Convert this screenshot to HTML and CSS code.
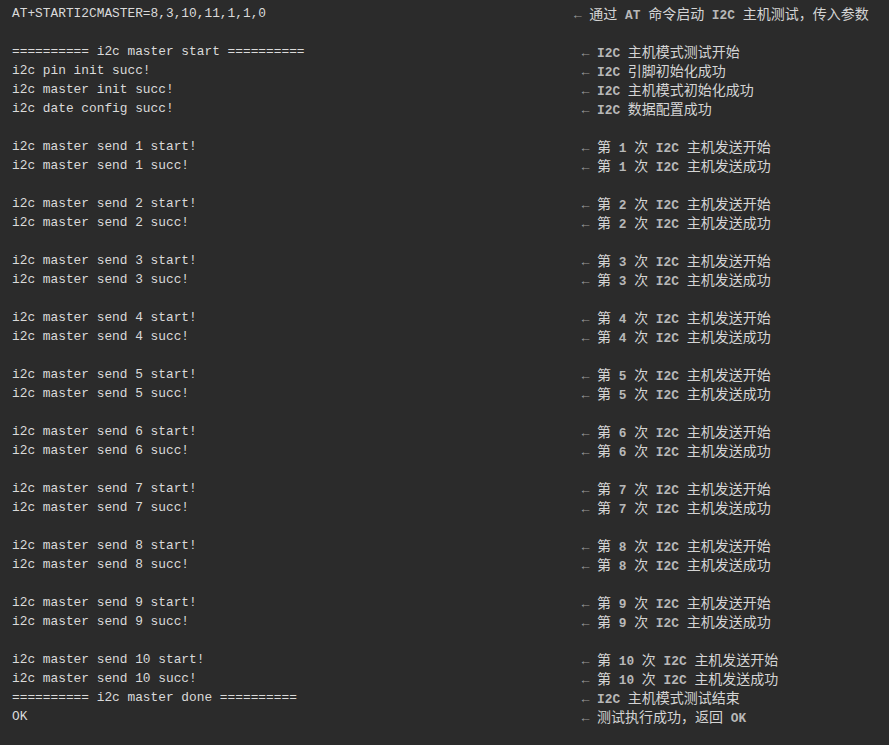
FILE: index.html
```html
<!DOCTYPE html>
<html lang="zh-CN">
<head>
<meta charset="utf-8">
<title>I2C master log</title>
<link rel="stylesheet" href="styles.css">
</head>
<body>
<div class="log">
  <div class="line"><span class="code first">AT+STARTI2CMASTER=8,3,10,11,1,1,0</span><span class="note"><span class="arr">←</span> <span class="zh">通过</span> <b>AT</b> <span class="zh">命令启动</span> <b>I2C</b> <span class="zh">主机测试，传入参数</span></span></div>
  <div class="line"></div>
  <div class="line"><span class="code">========== i2c master start ==========</span><span class="note"><span class="arr">←</span> <b>I2C</b> <span class="zh">主机模式测试开始</span></span></div>
  <div class="line"><span class="code">i2c pin init succ!</span><span class="note"><span class="arr">←</span> <b>I2C</b> <span class="zh">引脚初始化成功</span></span></div>
  <div class="line"><span class="code">i2c master init succ!</span><span class="note"><span class="arr">←</span> <b>I2C</b> <span class="zh">主机模式初始化成功</span></span></div>
  <div class="line"><span class="code">i2c date config succ!</span><span class="note"><span class="arr">←</span> <b>I2C</b> <span class="zh">数据配置成功</span></span></div>
  <div class="line"></div>
  <div class="line"><span class="code">i2c master send 1 start!</span><span class="note"><span class="arr">←</span> <span class="zh">第</span> <b>1</b> <span class="zh">次</span> <b>I2C</b> <span class="zh">主机发送开始</span></span></div>
  <div class="line"><span class="code">i2c master send 1 succ!</span><span class="note"><span class="arr">←</span> <span class="zh">第</span> <b>1</b> <span class="zh">次</span> <b>I2C</b> <span class="zh">主机发送成功</span></span></div>
  <div class="line"></div>
  <div class="line"><span class="code">i2c master send 2 start!</span><span class="note"><span class="arr">←</span> <span class="zh">第</span> <b>2</b> <span class="zh">次</span> <b>I2C</b> <span class="zh">主机发送开始</span></span></div>
  <div class="line"><span class="code">i2c master send 2 succ!</span><span class="note"><span class="arr">←</span> <span class="zh">第</span> <b>2</b> <span class="zh">次</span> <b>I2C</b> <span class="zh">主机发送成功</span></span></div>
  <div class="line"></div>
  <div class="line"><span class="code">i2c master send 3 start!</span><span class="note"><span class="arr">←</span> <span class="zh">第</span> <b>3</b> <span class="zh">次</span> <b>I2C</b> <span class="zh">主机发送开始</span></span></div>
  <div class="line"><span class="code">i2c master send 3 succ!</span><span class="note"><span class="arr">←</span> <span class="zh">第</span> <b>3</b> <span class="zh">次</span> <b>I2C</b> <span class="zh">主机发送成功</span></span></div>
  <div class="line"></div>
  <div class="line"><span class="code">i2c master send 4 start!</span><span class="note"><span class="arr">←</span> <span class="zh">第</span> <b>4</b> <span class="zh">次</span> <b>I2C</b> <span class="zh">主机发送开始</span></span></div>
  <div class="line"><span class="code">i2c master send 4 succ!</span><span class="note"><span class="arr">←</span> <span class="zh">第</span> <b>4</b> <span class="zh">次</span> <b>I2C</b> <span class="zh">主机发送成功</span></span></div>
  <div class="line"></div>
  <div class="line"><span class="code">i2c master send 5 start!</span><span class="note"><span class="arr">←</span> <span class="zh">第</span> <b>5</b> <span class="zh">次</span> <b>I2C</b> <span class="zh">主机发送开始</span></span></div>
  <div class="line"><span class="code">i2c master send 5 succ!</span><span class="note"><span class="arr">←</span> <span class="zh">第</span> <b>5</b> <span class="zh">次</span> <b>I2C</b> <span class="zh">主机发送成功</span></span></div>
  <div class="line"></div>
  <div class="line"><span class="code">i2c master send 6 start!</span><span class="note"><span class="arr">←</span> <span class="zh">第</span> <b>6</b> <span class="zh">次</span> <b>I2C</b> <span class="zh">主机发送开始</span></span></div>
  <div class="line"><span class="code">i2c master send 6 succ!</span><span class="note"><span class="arr">←</span> <span class="zh">第</span> <b>6</b> <span class="zh">次</span> <b>I2C</b> <span class="zh">主机发送成功</span></span></div>
  <div class="line"></div>
  <div class="line"><span class="code">i2c master send 7 start!</span><span class="note"><span class="arr">←</span> <span class="zh">第</span> <b>7</b> <span class="zh">次</span> <b>I2C</b> <span class="zh">主机发送开始</span></span></div>
  <div class="line"><span class="code">i2c master send 7 succ!</span><span class="note"><span class="arr">←</span> <span class="zh">第</span> <b>7</b> <span class="zh">次</span> <b>I2C</b> <span class="zh">主机发送成功</span></span></div>
  <div class="line"></div>
  <div class="line"><span class="code">i2c master send 8 start!</span><span class="note"><span class="arr">←</span> <span class="zh">第</span> <b>8</b> <span class="zh">次</span> <b>I2C</b> <span class="zh">主机发送开始</span></span></div>
  <div class="line"><span class="code">i2c master send 8 succ!</span><span class="note"><span class="arr">←</span> <span class="zh">第</span> <b>8</b> <span class="zh">次</span> <b>I2C</b> <span class="zh">主机发送成功</span></span></div>
  <div class="line"></div>
  <div class="line"><span class="code">i2c master send 9 start!</span><span class="note"><span class="arr">←</span> <span class="zh">第</span> <b>9</b> <span class="zh">次</span> <b>I2C</b> <span class="zh">主机发送开始</span></span></div>
  <div class="line"><span class="code">i2c master send 9 succ!</span><span class="note"><span class="arr">←</span> <span class="zh">第</span> <b>9</b> <span class="zh">次</span> <b>I2C</b> <span class="zh">主机发送成功</span></span></div>
  <div class="line"></div>
  <div class="line"><span class="code">i2c master send 10 start!</span><span class="note"><span class="arr">←</span> <span class="zh">第</span> <b>10</b> <span class="zh">次</span> <b>I2C</b> <span class="zh">主机发送开始</span></span></div>
  <div class="line"><span class="code">i2c master send 10 succ!</span><span class="note"><span class="arr">←</span> <span class="zh">第</span> <b>10</b> <span class="zh">次</span> <b>I2C</b> <span class="zh">主机发送成功</span></span></div>
  <div class="line"><span class="code">========== i2c master done ==========</span><span class="note"><span class="arr">←</span> <b>I2C</b> <span class="zh">主机模式测试结束</span></span></div>
  <div class="line"><span class="code">OK</span><span class="note"><span class="arr">←</span> <span class="zh">测试执行成功，返回</span> <b>OK</b></span></div>
</div>
</body>
</html>
```
FILE: styles.css
```css
html, body {
  margin: 0;
  padding: 0;
  background: #2b2b2b;
  height: 100%;
}

.log {
  padding: 4px 12px 0 12px;
  font-family: "Liberation Mono", "DejaVu Sans Mono", monospace;
  font-size: 12.83px;
  line-height: 19px;
  color: #dadada;
}

.line {
  display: flex;
  height: 19px;
  white-space: pre;
}

.code {
  width: 74ch;
  flex: none;
}

.code.first {
  width: 73ch;
}

.note {
  color: #d4d4d4;
}

.arr {
  color: #9a9a9a;
  display: inline-block;
  width: 1ch;
  text-align: center;
}

.note b {
  color: #b8b8b8;
  font-weight: bold;
}

.zh {
  font-family: "Noto Sans CJK SC", sans-serif;
  font-size: 14px;
}
```
